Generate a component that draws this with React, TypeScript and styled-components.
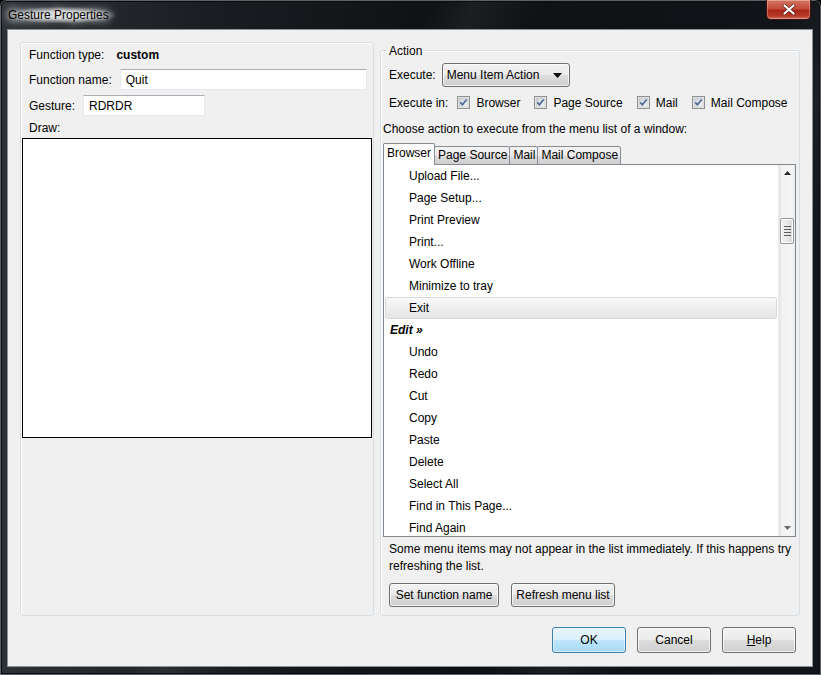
import styled, {createGlobalStyle} from 'styled-components';

const GlobalStyle = createGlobalStyle`
    html, body {
        margin: 0;
        padding: 0;
        background: #000;
    }
    * {
        box-sizing: border-box;
    }
`;

const browserItems = [
    'Upload File...',
    'Page Setup...',
    'Print Preview',
    'Print...',
    'Work Offline',
    'Minimize to tray',
    'Exit',
];

const editItems = [
    'Undo',
    'Redo',
    'Cut',
    'Copy',
    'Paste',
    'Delete',
    'Select All',
    'Find in This Page...',
    'Find Again',
];

const CheckBox: React.FC<{label: string}> = function ({label}) {
    return (
        <CheckItem>
            <svg width="13" height="13" viewBox="0 0 13 13">
                <defs>
                    <linearGradient id="cbg" x1="0" y1="0" x2="1" y2="1">
                        <stop offset="0" stopColor="#cbcfd5" />
                        <stop offset="1" stopColor="#f6f6f6" />
                    </linearGradient>
                </defs>
                <rect x="0.5" y="0.5" width="12" height="12" fill="#f4f4f4" stroke="#8e8f8f" />
                <rect x="2" y="2" width="9" height="9" fill="url(#cbg)" stroke="#b4b8bf" strokeWidth="0.6" />
                <path d="M3.3 6.4 L5.4 8.8 L9.7 3.4" fill="none" stroke="#4a6694" strokeWidth="1.6" />
            </svg>
            <span>{label}</span>
        </CheckItem>
    );
};

const App: React.FC = function () {
    return (
        <>
            <GlobalStyle />
            <Window>
                <TitleBar>
                    <TitleText>Gesture Properties</TitleText>
                    <CloseButton>
                        <svg width="14" height="11" viewBox="0 0 14 11">
                            <path d="M2.5 1.5 L11.5 9.5 M11.5 1.5 L2.5 9.5" stroke="#5a1a14" strokeWidth="3.6" strokeLinecap="round" />
                            <path d="M2.5 1.5 L11.5 9.5 M11.5 1.5 L2.5 9.5" stroke="#ffffff" strokeWidth="2.3" strokeLinecap="round" />
                        </svg>
                    </CloseButton>
                </TitleBar>
                <Client>
                    <MainRow>
                        <LeftBox>
                            <FieldRow>
                                <Label>Function type:</Label>
                                <Strong>custom</Strong>
                            </FieldRow>
                            <FieldRow $top={6}>
                                <Label>Function name:</Label>
                                <TextInput $width={247} $left={8}>Quit</TextInput>
                            </FieldRow>
                            <FieldRow $top={5}>
                                <Label>Gesture:</Label>
                                <TextInput $width={122} $left={8}>RDRDR</TextInput>
                            </FieldRow>
                            <FieldRow $top={4}>
                                <Label>Draw:</Label>
                            </FieldRow>
                            <DrawArea />
                        </LeftBox>
                        <ActionBox>
                            <Legend>Action</Legend>
                            <ExecuteRow>
                                <Label>Execute:</Label>
                                <Select>
                                    <span>Menu Item Action</span>
                                    <svg width="9" height="5" viewBox="0 0 9 5">
                                        <path d="M0 0 H9 L4.5 5 Z" fill="#000" />
                                    </svg>
                                </Select>
                            </ExecuteRow>
                            <CheckRow>
                                <Label>Execute in:</Label>
                                <CheckBox label="Browser" />
                                <CheckBox label="Page Source" />
                                <CheckBox label="Mail" />
                                <CheckBox label="Mail Compose" />
                            </CheckRow>
                            <ChooseText>Choose action to execute from the menu list of a window:</ChooseText>
                            <TabStrip>
                                <Tab $active>Browser</Tab>
                                <Tab>Page Source</Tab>
                                <Tab>Mail</Tab>
                                <Tab>Mail Compose</Tab>
                            </TabStrip>
                            <ListBox>
                                <ListRows>
                                    {browserItems.map(item => (
                                        <ListItem key={item} $selected={item === 'Exit'}>
                                            {item}
                                        </ListItem>
                                    ))}
                                    <ListHeader>Edit »</ListHeader>
                                    {editItems.map(item => (
                                        <ListItem key={item}>{item}</ListItem>
                                    ))}
                                </ListRows>
                                <ScrollBar>
                                    <ScrollArrow>
                                        <svg width="7" height="4" viewBox="0 0 7 4">
                                            <path d="M0 4 L3.5 0 L7 4 Z" fill="#2b2b2b" />
                                        </svg>
                                    </ScrollArrow>
                                    <ScrollTrack>
                                        <ScrollThumb>
                                            <Grip />
                                            <Grip />
                                            <Grip />
                                            <Grip />
                                        </ScrollThumb>
                                    </ScrollTrack>
                                    <ScrollArrow>
                                        <svg width="7" height="4" viewBox="0 0 7 4">
                                            <path d="M0 0 L7 0 L3.5 4 Z" fill="#6b6b6b" />
                                        </svg>
                                    </ScrollArrow>
                                </ScrollBar>
                            </ListBox>
                            <NoteText>
                                Some menu items may not appear in the list immediately. If this happens try
                                refreshing the list.
                            </NoteText>
                            <ActionButtons>
                                <Button $width={110}>Set function name</Button>
                                <Button $width={104}>Refresh menu list</Button>
                            </ActionButtons>
                        </ActionBox>
                    </MainRow>
                    <Footer>
                        <Button $width={74} $height={26} $default>
                            OK
                        </Button>
                        <Button $width={74} $height={26}>
                            Cancel
                        </Button>
                        <Button $width={74} $height={26}>
                            <u>H</u>elp
                        </Button>
                    </Footer>
                </Client>
            </Window>
        </>
    );
};

/* Styled components */

const Window = styled.div`
    width: 821px;
    height: 675px;
    display: flex;
    flex-direction: column;
    padding-bottom: 8px;
    border-radius: 6px 6px 0 0;
    background:
        linear-gradient(115deg, transparent 38%, rgba(255, 255, 255, 0.06) 42%, transparent 48%),
        linear-gradient(115deg, transparent 70%, rgba(255, 255, 255, 0.05) 76%, transparent 82%),
        linear-gradient(90deg, #2d3237 0%, #1a1e22 25%, #0d1114 55%, #111519 100%);
    box-shadow: inset 0 0 0 1px #5c6166, inset 0 0 0 2px #0b0d0f;
    font-family: 'Liberation Sans', Arial, sans-serif;
    font-size: 12px;
    color: #000;
`;

const TitleBar = styled.div`
    flex: 0 0 29px;
    height: 29px;
    display: flex;
    justify-content: space-between;
    align-items: flex-start;
    padding: 0 10px 0 8px;
`;

const TitleText = styled.div`
    margin-top: 7px;
    padding: 0 6px 0 0;
    font-size: 12px;
    line-height: 16px;
    color: #000;
    text-shadow: 0 0 6px #fff, 0 0 10px #fff, 0 0 14px #fff;
    background: radial-gradient(ellipse at 50% 50%, rgba(235, 238, 240, 0.8) 30%, rgba(200, 205, 210, 0) 75%);
`;

const CloseButton = styled.div`
    width: 45px;
    height: 20px;
    display: flex;
    align-items: center;
    justify-content: center;
    border: 1px solid #3b1410;
    border-top: none;
    border-radius: 0 0 5px 5px;
    background: linear-gradient(#e09b8c 0%, #cf6e5c 8%, #c44c3b 45%, #a8271a 55%, #b83a28 85%, #d5786a 100%);
    box-shadow: inset 0 0 0 1px rgba(255, 200, 190, 0.35);
`;

const Client = styled.div`
    flex: 1;
    min-height: 0;
    margin: 0 8px 0 7px;
    display: flex;
    flex-direction: column;
    padding: 12px 12px 13px 12px;
    background: #f0f0f0;
    border: 1px solid #8b9197;
`;

const MainRow = styled.div`
    flex: 1;
    min-height: 0;
    display: flex;
    gap: 6px;
`;

const LeftBox = styled.div`
    width: 354px;
    display: flex;
    flex-direction: column;
    padding: 4px 1px 0 1px;
    border: 1px solid #d5dfe5;
    border-radius: 3px;
    box-shadow: inset 1px 1px 0 #fff;
`;

const FieldRow = styled.div<{$top?: number}>`
    display: flex;
    align-items: center;
    min-height: 16px;
    margin-top: ${p => p.$top ?? 0}px;
    padding-left: 7px;
    line-height: 16px;
`;

const Label = styled.span`
    white-space: nowrap;
`;

const Strong = styled.span`
    font-weight: bold;
    margin-left: 12px;
`;

const TextInput = styled.div<{$width: number; $left: number}>`
    width: ${p => p.$width}px;
    height: 21px;
    margin-left: ${p => p.$left}px;
    padding: 2px 5px;
    line-height: 16px;
    background: #fff;
    border: 1px solid #e3e9ef;
    border-top-color: #abadb3;
    border-radius: 1px;
`;

const DrawArea = styled.div`
    height: 300px;
    margin-top: 2px;
    background: #fff;
    border: 1px solid #000;
`;

const ActionBox = styled.fieldset`
    flex: 1;
    min-width: 0;
    margin: 0;
    display: flex;
    flex-direction: column;
    padding: 0 3px 8px 2px;
    border: 1px solid #d5dfe5;
    border-radius: 3px;
    box-shadow: inset 1px 1px 0 #fff;
`;

const Legend = styled.legend`
    margin-left: 4px;
    padding: 1px 2px 0 2px;
    line-height: 16px;
`;

const ExecuteRow = styled.div`
    display: flex;
    align-items: center;
    margin-top: 4px;
    padding-left: 6px;
    height: 24px;
`;

const Select = styled.div`
    width: 128px;
    height: 24px;
    margin-left: 6px;
    display: flex;
    align-items: center;
    justify-content: space-between;
    padding: 0 7px 0 4px;
    border: 1px solid #707070;
    border-radius: 3px;
    background: linear-gradient(#f2f2f2 0%, #ebebeb 48%, #dddddd 52%, #cfcfcf 100%);
    box-shadow: inset 0 0 0 1px rgba(255, 255, 255, 0.7);
`;

const CheckRow = styled.div`
    display: flex;
    align-items: center;
    gap: 14px;
    height: 16px;
    margin-top: 8px;
    padding-left: 6px;
    & > ${Label} {
        margin-right: -5px;
    }
`;

const CheckItem = styled.span`
    display: flex;
    align-items: center;
    gap: 6px;
    svg {
        display: block;
    }
`;

const ChooseText = styled.div`
    margin-top: 10px;
    line-height: 16px;
`;

const TabStrip = styled.div`
    display: flex;
    align-items: flex-end;
    height: 22px;
    margin-top: 6px;
    margin-bottom: -1px;
    position: relative;
    z-index: 1;
`;

const Tab = styled.div<{$active?: boolean}>`
    height: ${p => (p.$active ? 22 : 19)}px;
    margin-right: -1px;
    padding: ${p => (p.$active ? '1px 3px 0 3px' : '0 2px 0 3px')};
    line-height: 16px;
    border: 1px solid #898c95;
    border-bottom: ${p => (p.$active ? 'none' : '1px solid #898c95')};
    border-radius: 2px 2px 0 0;
    background: ${p => (p.$active ? '#fff' : 'linear-gradient(#f3f3f3 0%, #ebebeb 50%, #dddddd 51%, #cfcfcf 100%)')};
    position: relative;
    z-index: ${p => (p.$active ? 2 : 1)};
`;

const ListBox = styled.div`
    height: 375px;
    display: flex;
    overflow: hidden;
    background: #fff;
    border: 1px solid #828790;
`;

const ListRows = styled.div`
    flex: 1;
    display: flex;
    flex-direction: column;
    overflow: hidden;
`;

const ListItem = styled.div<{$selected?: boolean}>`
    flex: 0 0 22px;
    height: 22px;
    line-height: 20px;
    margin: 0 1px;
    padding-left: 23px;
    border: 1px solid ${p => (p.$selected ? '#d9d9d9' : 'transparent')};
    border-radius: 2px;
    background: ${p => (p.$selected ? 'linear-gradient(#f8f8f8 0%, #e5e5e5 100%)' : 'transparent')};
`;

const ListHeader = styled.div`
    flex: 0 0 22px;
    height: 22px;
    line-height: 22px;
    padding-left: 6px;
    font-weight: bold;
    font-style: italic;
`;

const ScrollBar = styled.div`
    width: 17px;
    display: flex;
    flex-direction: column;
    background: linear-gradient(90deg, #e3e3e3 0%, #f2f2f2 20%, #f5f5f5 80%, #ececec 100%);
    border-left: 1px solid #ececec;
`;

const ScrollArrow = styled.div`
    height: 17px;
    display: flex;
    align-items: center;
    justify-content: center;
`;

const ScrollTrack = styled.div`
    flex: 1;
    padding-top: 36px;
`;

const ScrollThumb = styled.div`
    height: 26px;
    margin: 0 1px;
    display: flex;
    flex-direction: column;
    align-items: center;
    justify-content: center;
    gap: 2px;
    border: 1px solid #989898;
    border-radius: 2px;
    background: linear-gradient(90deg, #f3f3f3 0%, #e8e8e8 50%, #d9d9d9 100%);
    box-shadow: inset 0 0 0 1px #fbfbfb;
`;

const Grip = styled.div`
    width: 7px;
    height: 1px;
    background: #5f5f5f;
`;

const NoteText = styled.div`
    margin-top: 4px;
    padding: 0 4px 0 6px;
    line-height: 17px;
`;

const ActionButtons = styled.div`
    display: flex;
    gap: 12px;
    margin-top: 8px;
    padding-left: 6px;
`;

const Button = styled.div<{$width: number; $height?: number; $default?: boolean}>`
    width: ${p => p.$width}px;
    height: ${p => p.$height ?? 24}px;
    display: flex;
    align-items: center;
    justify-content: center;
    white-space: nowrap;
    border: 1px solid ${p => (p.$default ? '#3c7fb1' : '#707070')};
    border-radius: 3px;
    background: ${p =>
        p.$default
            ? 'linear-gradient(#eaf6fd 0%, #d9f0fc 48%, #bee6fd 52%, #a7d9f5 100%)'
            : 'linear-gradient(#f2f2f2 0%, #ebebeb 48%, #dddddd 52%, #cfcfcf 100%)'};
    box-shadow: inset 0 0 0 1px ${p => (p.$default ? 'rgba(255,255,255,0.55)' : 'rgba(255,255,255,0.7)')};
    u {
        text-decoration: underline;
    }
`;

const Footer = styled.div`
    display: flex;
    justify-content: flex-end;
    gap: 11px;
    margin-top: 11px;
    padding-right: 4px;
`;

export default App;
